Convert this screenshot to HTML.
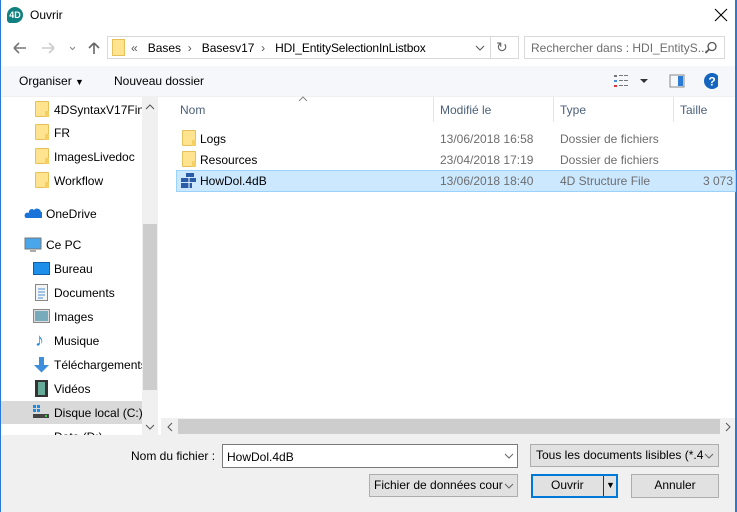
<!DOCTYPE html>
<html><head><meta charset="utf-8">
<style>
*{margin:0;padding:0;box-sizing:border-box}
body{width:737px;height:512px;overflow:hidden;background:#fff;font-family:"Liberation Sans",sans-serif;font-size:12px;color:#000;position:relative}
.a{position:absolute;white-space:nowrap}
.fold{position:absolute;width:14px;height:16px;background:#ffe38f;border:1px solid #e6c15a;border-radius:1px}
.fold:after{content:"";position:absolute;right:-1px;bottom:-1px;width:4px;height:6px;background:#f5cf62}
.nav{position:absolute;left:54px;font-size:12px;white-space:nowrap}
.btn{position:absolute;background:#e1e1e1;border:1px solid #adadad;text-align:center;line-height:21px;white-space:nowrap}
</style></head><body>
<div class="a" style="left:0;top:0;width:1px;height:512px;background:#2b79d6"></div>
<div class="a" style="right:0;top:0;width:2px;height:512px;background:#2b79d6"></div>
<!-- title -->
<div class="a" style="left:7px;top:7px;width:16px;height:16px;border-radius:50% 50% 50% 20%;background:#118080;color:#fff;font-size:9px;font-weight:bold;line-height:16px;text-align:center">4D</div>
<div class="a" style="left:30px;top:8px;font-size:12px">Ouvrir</div>
<svg class="a" style="left:714px;top:8px" width="14" height="14"><path d="M1 1L13 13M13 1L1 13" stroke="#000" stroke-width="1.1"/></svg>
<!-- nav buttons -->
<svg class="a" style="left:10px;top:40px" width="100" height="16"><path d="M4 8h12M4 8l5-5M4 8l5 5" stroke="#777" stroke-width="1.6" fill="none"/><path d="M32 8h12M44 8l-5-5M44 8l-5 5" stroke="#ccc" stroke-width="1.6" fill="none"/><path d="M60 7l2.5 2.5 2.5-2.5" stroke="#888" fill="none"/><path d="M84 14V3M84 3l-5 5M84 3l5 5" stroke="#666" stroke-width="1.6" fill="none"/></svg>
<div class="a" style="left:107px;top:36px;width:412px;height:23px;border:1px solid #d9d9d9"></div>
<div class="a" style="left:112px;top:39px;width:13px;height:17px;background:#ffe38f;border:1px solid #e6c15a"></div>
<div class="a" style="left:131px;top:41px;color:#555">«&nbsp;&nbsp; <span style="color:#000">Bases</span> &nbsp;›&nbsp;&nbsp; <span style="color:#000">Basesv17</span> &nbsp;›&nbsp;&nbsp; <span style="color:#000;letter-spacing:-0.15px">HDI_EntitySelectionInListbox</span></div>
<svg class="a" style="left:475px;top:44px" width="10" height="8"><path d="M1 2l4 4 4-4" stroke="#555" fill="none"/></svg>
<div class="a" style="left:490px;top:36px;width:1px;height:23px;background:#d9d9d9"></div>
<div class="a" style="left:496px;top:39px;color:#666;font-size:14px">↻</div>
<div class="a" style="left:524px;top:36px;width:201px;height:23px;border:1px solid #d9d9d9"></div>
<div class="a" style="left:531px;top:41px;color:#6d6d6d">Rechercher dans : HDI_EntityS...</div>
<svg class="a" style="left:704px;top:41px" width="14" height="14"><circle cx="8" cy="5.5" r="4" stroke="#555" stroke-width="1.3" fill="none"/><path d="M5 8.5L1.5 12" stroke="#555" stroke-width="1.6"/></svg>
<!-- toolbar -->
<div class="a" style="left:1px;top:66px;width:734px;height:30px;background:#f5f7fa"></div>
<div class="a" style="left:19px;top:74px">Organiser <span style="font-size:9px">▼</span></div>
<div class="a" style="left:114px;top:74px">Nouveau dossier</div>
<svg class="a" style="left:613px;top:73px" width="105" height="18"><g fill="#777"><rect x="1" y="2" width="3" height="2"/><rect x="1" y="7" width="3" height="2" fill="#4a90d9"/><rect x="1" y="12" width="3" height="2" fill="#d33"/><rect x="6" y="2" width="4" height="1"/><rect x="6" y="7" width="4" height="1"/><rect x="6" y="12" width="4" height="1"/><rect x="11" y="2" width="4" height="1"/><rect x="11" y="7" width="4" height="1"/><rect x="11" y="12" width="4" height="1"/></g><path d="M27 6h8l-4 4z" fill="#333"/><rect x="57" y="2" width="14" height="12" fill="none" stroke="#888"/><rect x="65" y="3" width="5" height="10" fill="#2b7bd6"/><circle cx="99" cy="8" r="8" fill="#1565c0"/><text x="99" y="12.5" font-size="12" font-weight="bold" fill="#fff" text-anchor="middle" font-family="Liberation Sans">?</text></svg>
<div class="a" style="left:1px;top:96px;width:734px;height:1px;background:#f0f0f0"></div>
<!-- left nav -->
<div class="a" style="left:1px;top:97px;width:141px;height:338px;overflow:hidden">
<div class="fold" style="left:34px;top:4px"></div><div class="nav" style="left:53px;top:6px">4DSyntaxV17Final</div>
<div class="fold" style="left:34px;top:27px"></div><div class="nav" style="left:53px;top:29px">FR</div>
<div class="fold" style="left:34px;top:51px"></div><div class="nav" style="left:53px;top:53px">ImagesLivedoc</div>
<div class="fold" style="left:34px;top:75px"></div><div class="nav" style="left:53px;top:77px">Workflow</div>
<svg class="a" style="left:23px;top:110px" width="18" height="12"><path d="M2 11h15a3 3 0 0 0 0-6 4 4 0 0 0-7-2 3 3 0 0 0-5 3 2.5 2.5 0 0 0-3 5z" fill="#1a73d9"/></svg>
<div class="nav" style="left:45px;top:110px">OneDrive</div>
<svg class="a" style="left:23px;top:140px" width="18" height="16"><rect x="1" y="1" width="16" height="11" fill="#49a6ea" stroke="#777"/><rect x="6" y="13" width="6" height="2" fill="#aaa"/></svg>
<div class="nav" style="left:45px;top:141px">Ce PC</div>
<svg class="a" style="left:32px;top:165px" width="17" height="14"><rect x="0.5" y="0.5" width="16" height="12" fill="#1d8fe8" stroke="#0e5ea8"/></svg>
<div class="nav" style="left:53px;top:165px">Bureau</div>
<svg class="a" style="left:34px;top:187px" width="13" height="17"><rect x="0.5" y="0.5" width="12" height="16" fill="#f4f4f4" stroke="#888"/><path d="M3 5h7M3 8h7M3 11h7M3 14h5" stroke="#4a8fd6"/></svg>
<div class="nav" style="left:53px;top:189px">Documents</div>
<svg class="a" style="left:32px;top:212px" width="17" height="14"><rect x="0.5" y="0.5" width="16" height="13" fill="#ddd" stroke="#888"/><rect x="2" y="2" width="13" height="10" fill="#7ab"/></svg>
<div class="nav" style="left:53px;top:213px">Images</div>
<div class="a" style="left:34px;top:233px;font-size:18px;color:#1e88e5">♪</div>
<div class="nav" style="left:53px;top:237px">Musique</div>
<svg class="a" style="left:32px;top:259px" width="17" height="17"><path d="M6 1h5v8h5l-7.5 7.5L1 9h5z" fill="#3d8fdc"/></svg>
<div class="nav" style="left:53px;top:261px">Téléchargements</div>
<svg class="a" style="left:34px;top:283px" width="13" height="17"><rect width="13" height="17" fill="#333"/><rect x="3" y="2" width="7" height="13" fill="#6a9"/></svg>
<div class="nav" style="left:53px;top:285px">Vidéos</div>
<div class="a" style="left:0;top:304px;width:141px;height:23px;background:#d9d9d9"></div>
<svg class="a" style="left:31px;top:307px" width="18" height="16"><g fill="#1f8ae0"><rect x="1" y="1" width="3" height="3"/><rect x="5" y="1" width="3" height="3"/><rect x="1" y="5" width="3" height="3"/><rect x="5" y="5" width="3" height="3"/></g><rect x="1" y="10" width="16" height="4" fill="#444"/><rect x="13" y="11" width="2" height="2" fill="#3c3"/></svg>
<div class="nav" style="left:53px;top:309px">Disque local (C:)</div>
<div class="nav" style="left:53px;top:333px">Data (D:)</div>
</div>
<!-- v scrollbar -->
<div class="a" style="left:142px;top:97px;width:16px;height:338px;background:#f0f0f0"></div>
<div class="a" style="left:143px;top:224px;width:14px;height:166px;background:#cdcdcd"></div>
<svg class="a" style="left:145px;top:103px" width="10" height="8"><path d="M1 6l4-4 4 4" stroke="#555" fill="none"/></svg>
<svg class="a" style="left:145px;top:423px" width="10" height="8"><path d="M1 2l4 4 4-4" stroke="#555" fill="none"/></svg>
<!-- header -->
<svg class="a" style="left:298px;top:96px" width="10" height="6"><path d="M1 5l4-4 4 4" stroke="#888" fill="none"/></svg>
<div class="a" style="left:180px;top:103px;color:#4c607a">Nom</div>
<div class="a" style="left:433px;top:97px;width:1px;height:25px;background:#e5e5e5"></div>
<div class="a" style="left:440px;top:103px;color:#4c607a">Modifié le</div>
<div class="a" style="left:553px;top:97px;width:1px;height:25px;background:#e5e5e5"></div>
<div class="a" style="left:560px;top:103px;color:#4c607a">Type</div>
<div class="a" style="left:673px;top:97px;width:1px;height:25px;background:#e5e5e5"></div>
<div class="a" style="left:680px;top:103px;color:#4c607a">Taille</div>
<!-- rows -->
<div class="fold" style="left:182px;top:130px"></div>
<div class="a" style="left:200px;top:132px">Logs</div>
<div class="a" style="left:440px;top:132px;color:#6d6d6d">13/06/2018 16:58</div>
<div class="a" style="left:560px;top:132px;color:#6d6d6d">Dossier de fichiers</div>
<div class="fold" style="left:182px;top:151px"></div>
<div class="a" style="left:200px;top:153px">Resources</div>
<div class="a" style="left:440px;top:153px;color:#6d6d6d">23/04/2018 17:19</div>
<div class="a" style="left:560px;top:153px;color:#6d6d6d">Dossier de fichiers</div>
<div class="a" style="left:176px;top:170px;width:560px;height:22px;background:#cce8ff;border:1px solid #99d1ff"></div>
<svg class="a" style="left:180px;top:172px" width="17" height="17"><rect x="6" y="1" width="8" height="4" fill="#2a5da8"/><rect x="1" y="6" width="15" height="4" fill="#2a5da8"/><rect x="1" y="11" width="11" height="5" fill="#2a5da8"/><path d="M9 5v11" stroke="#fff"/></svg>
<div class="a" style="left:200px;top:174px">HowDol.4dB</div>
<div class="a" style="left:440px;top:174px;color:#6d6d6d">13/06/2018 18:40</div>
<div class="a" style="left:560px;top:174px;color:#6d6d6d">4D Structure File</div>
<div class="a" style="left:703px;top:174px;color:#6d6d6d">3 073 K</div>
<!-- h scrollbar -->
<div class="a" style="left:161px;top:418px;width:574px;height:17px;background:#f0f0f0"></div>
<div class="a" style="left:178px;top:419px;width:542px;height:15px;background:#cdcdcd"></div>
<svg class="a" style="left:166px;top:422px" width="8" height="10"><path d="M6 1L2 5l4 4" stroke="#555" fill="none"/></svg>
<svg class="a" style="left:724px;top:422px" width="8" height="10"><path d="M2 1l4 4-4 4" stroke="#555" fill="none"/></svg>
<!-- bottom -->
<div class="a" style="left:1px;top:435px;width:734px;height:77px;background:#f0f0f0"></div>
<div class="a" style="left:131px;top:449px">Nom du fichier :</div>
<div class="a" style="left:222px;top:444px;width:296px;height:24px;background:#fff;border:1px solid #7a7a7a"></div>
<div class="a" style="left:227px;top:450px">HowDol.4dB</div>
<svg class="a" style="left:504px;top:452px" width="10" height="8"><path d="M1 2l4 4 4-4" stroke="#666" fill="none"/></svg>
<div class="btn" style="left:530px;top:444px;width:189px;height:23px;text-align:left;padding-left:5px">Tous les documents lisibles (*.4</div>
<svg class="a" style="left:704px;top:452px" width="10" height="8"><path d="M1 2l4 4 4-4" stroke="#666" fill="none"/></svg>
<div class="btn" style="left:369px;top:474px;width:149px;height:23px;text-align:left;padding-left:4px;overflow:hidden">Fichier de données cour</div>
<svg class="a" style="left:504px;top:482px" width="10" height="8"><path d="M1 2l4 4 4-4" stroke="#666" fill="none"/></svg>
<div class="btn" style="left:531px;top:474px;width:87px;height:24px;border:2px solid #0078d7;text-align:left;padding-left:18px;line-height:19px">Ouvrir</div>
<div class="a" style="left:603px;top:476px;width:1px;height:20px;background:#333"></div>
<div class="a" style="left:606px;top:480px;font-size:9px">▼</div>
<div class="btn" style="left:631px;top:474px;width:88px;height:24px">Annuler</div>
</body></html>
